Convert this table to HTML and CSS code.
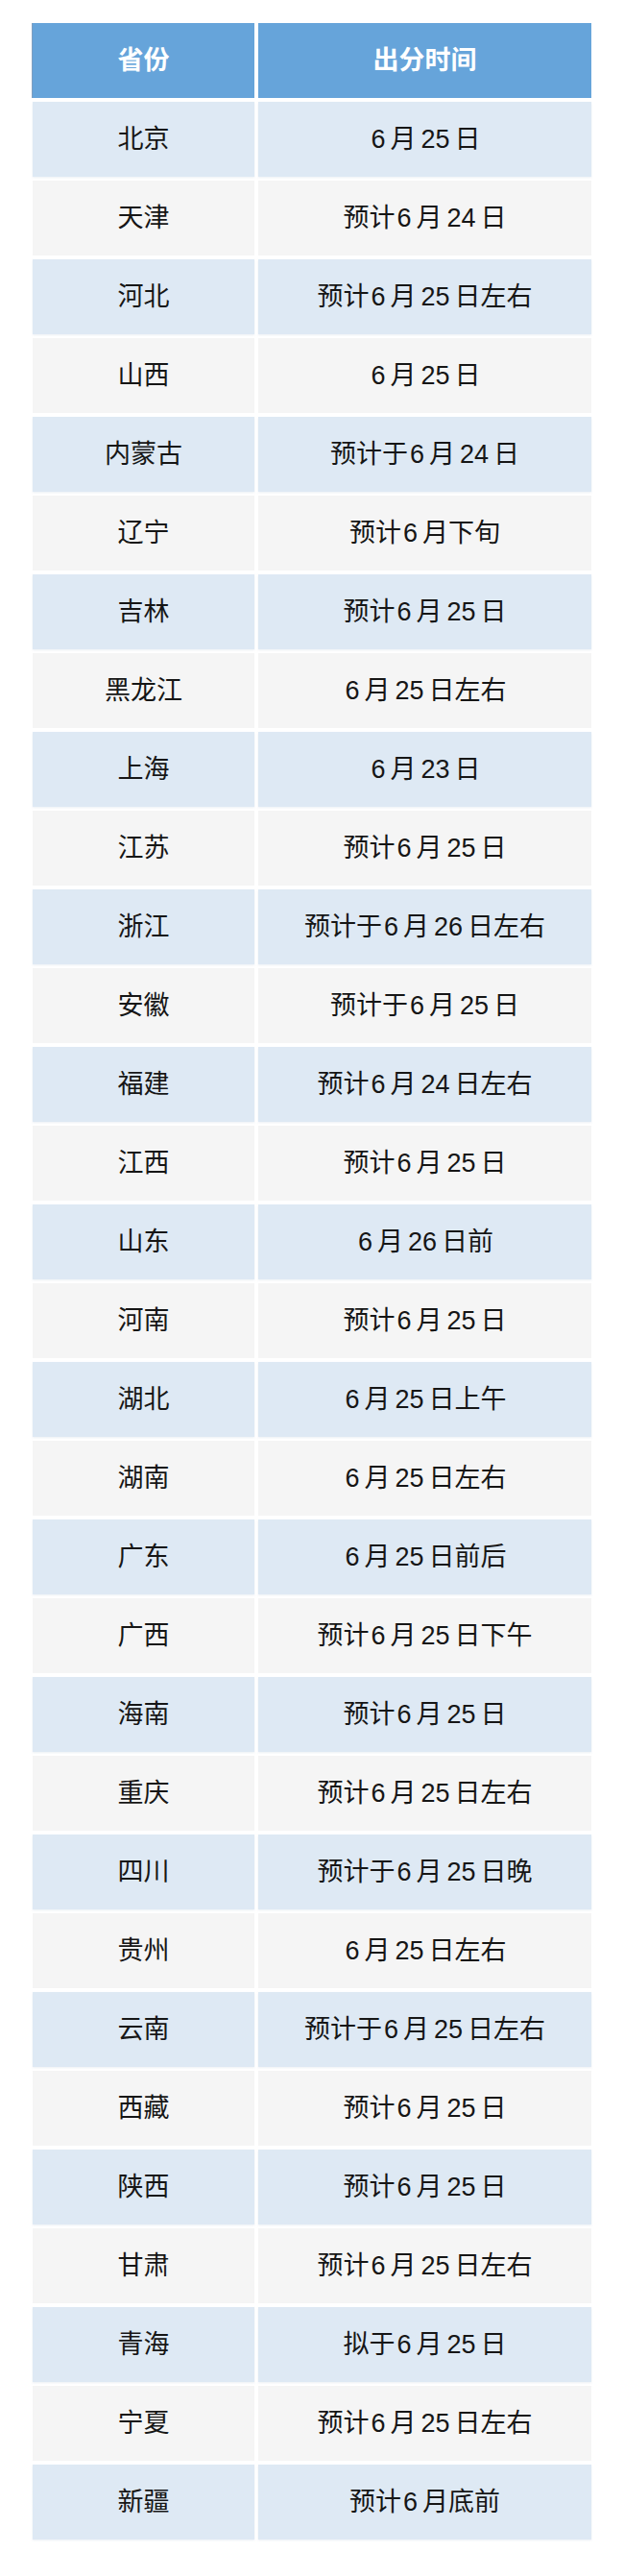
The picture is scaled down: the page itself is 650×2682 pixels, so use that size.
FILE: index.html
```html
<!DOCTYPE html>
<html lang="zh-CN">
<head>
<meta charset="utf-8">
<title>各省出分时间</title>
<link rel="stylesheet" href="styles.css">
</head>
<body>
<table class="score-table">
  <thead>
    <tr><th>省份</th><th>出分时间</th></tr>
  </thead>
  <tbody>
    <tr><td>北京</td><td><span class="n">6</span>月<span class="n d">25</span>日</td></tr>
    <tr><td>天津</td><td>预计<span class="n">6</span>月<span class="n d">24</span>日</td></tr>
    <tr><td>河北</td><td>预计<span class="n">6</span>月<span class="n d">25</span>日左右</td></tr>
    <tr><td>山西</td><td><span class="n">6</span>月<span class="n d">25</span>日</td></tr>
    <tr><td>内蒙古</td><td>预计于<span class="n">6</span>月<span class="n d">24</span>日</td></tr>
    <tr><td>辽宁</td><td>预计<span class="n">6</span>月下旬</td></tr>
    <tr><td>吉林</td><td>预计<span class="n">6</span>月<span class="n d">25</span>日</td></tr>
    <tr><td>黑龙江</td><td><span class="n">6</span>月<span class="n d">25</span>日左右</td></tr>
    <tr><td>上海</td><td><span class="n">6</span>月<span class="n d">23</span>日</td></tr>
    <tr><td>江苏</td><td>预计<span class="n">6</span>月<span class="n d">25</span>日</td></tr>
    <tr><td>浙江</td><td>预计于<span class="n">6</span>月<span class="n d">26</span>日左右</td></tr>
    <tr><td>安徽</td><td>预计于<span class="n">6</span>月<span class="n d">25</span>日</td></tr>
    <tr><td>福建</td><td>预计<span class="n">6</span>月<span class="n d">24</span>日左右</td></tr>
    <tr><td>江西</td><td>预计<span class="n">6</span>月<span class="n d">25</span>日</td></tr>
    <tr><td>山东</td><td><span class="n">6</span>月<span class="n d">26</span>日前</td></tr>
    <tr><td>河南</td><td>预计<span class="n">6</span>月<span class="n d">25</span>日</td></tr>
    <tr><td>湖北</td><td><span class="n">6</span>月<span class="n d">25</span>日上午</td></tr>
    <tr><td>湖南</td><td><span class="n">6</span>月<span class="n d">25</span>日左右</td></tr>
    <tr><td>广东</td><td><span class="n">6</span>月<span class="n d">25</span>日前后</td></tr>
    <tr><td>广西</td><td>预计<span class="n">6</span>月<span class="n d">25</span>日下午</td></tr>
    <tr><td>海南</td><td>预计<span class="n">6</span>月<span class="n d">25</span>日</td></tr>
    <tr><td>重庆</td><td>预计<span class="n">6</span>月<span class="n d">25</span>日左右</td></tr>
    <tr><td>四川</td><td>预计于<span class="n">6</span>月<span class="n d">25</span>日晚</td></tr>
    <tr><td>贵州</td><td><span class="n">6</span>月<span class="n d">25</span>日左右</td></tr>
    <tr><td>云南</td><td>预计于<span class="n">6</span>月<span class="n d">25</span>日左右</td></tr>
    <tr><td>西藏</td><td>预计<span class="n">6</span>月<span class="n d">25</span>日</td></tr>
    <tr><td>陕西</td><td>预计<span class="n">6</span>月<span class="n d">25</span>日</td></tr>
    <tr><td>甘肃</td><td>预计<span class="n">6</span>月<span class="n d">25</span>日左右</td></tr>
    <tr><td>青海</td><td>拟于<span class="n">6</span>月<span class="n d">25</span>日</td></tr>
    <tr><td>宁夏</td><td>预计<span class="n">6</span>月<span class="n d">25</span>日左右</td></tr>
    <tr><td>新疆</td><td>预计<span class="n">6</span>月底前</td></tr>
  </tbody>
</table>
</body>
</html>
```

FILE: styles.css
```css
html, body {
  margin: 0;
  padding: 0;
  background: #ffffff;
}

body {
  font-family: "Liberation Sans", "Noto Sans CJK SC", sans-serif;
  color: #161616;
}

.score-table {
  margin: 20px 30px;
  width: 590px;
  border-collapse: separate;
  border-spacing: 4px;
  table-layout: fixed;
  font-size: 27px;
}

.score-table th,
.score-table td {
  height: 78px;
  padding: 0;
  text-align: center;
  vertical-align: middle;
  line-height: 1;
  white-space: nowrap;
}

.score-table th:first-child,
.score-table td:first-child {
  width: 231px;
}

.score-table th {
  background: #66a4da;
  color: #ffffff;
  font-weight: bold;
  box-shadow: -1px 0 0 #7f9fc0;
}

.score-table th + th {
  box-shadow: none;
}

.score-table tbody tr:nth-child(odd) td {
  background: #dee9f4;
  box-shadow: 0 1px 2px rgba(120, 150, 180, 0.15);
}

.score-table tbody tr:nth-child(even) td {
  background: #f5f5f5;
}

.n {
  margin: 0 5px 0 2px;
}

.n.d {
  margin-left: 5px;
}
```
